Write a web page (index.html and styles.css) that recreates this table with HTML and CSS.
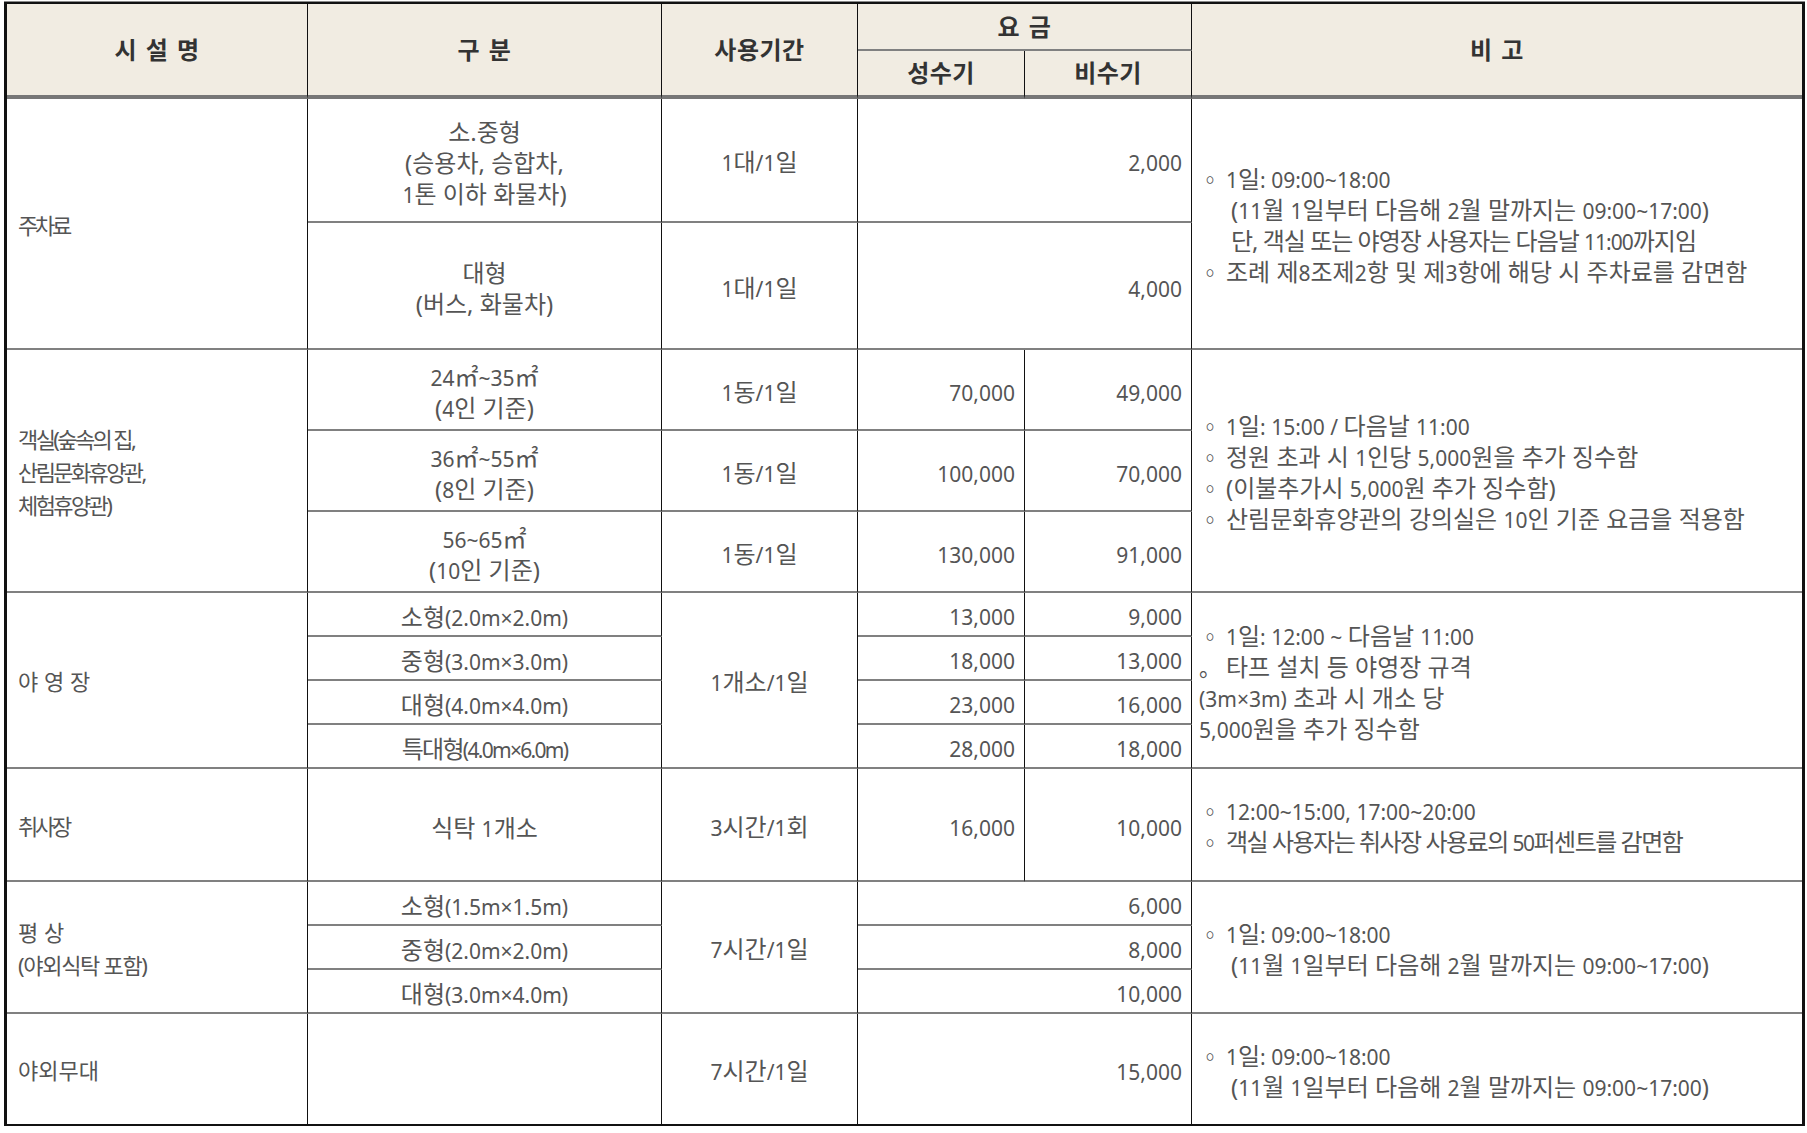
FILE: index.html
```html
<!DOCTYPE html>
<html lang="ko">
<head>
<meta charset="utf-8">
<title>시설 사용료</title>
<link rel="stylesheet" href="styles.css">
</head>
<body>
<table class="fee-table">
  <colgroup>
    <col class="c-name">
    <col class="c-kind">
    <col class="c-period">
    <col class="c-peak">
    <col class="c-off">
    <col class="c-note">
  </colgroup>
  <thead>
    <tr class="hr1">
      <th rowspan="2">시 설 명</th>
      <th rowspan="2">구 분</th>
      <th rowspan="2">사용기간</th>
      <th colspan="2" class="fee">요 금</th>
      <th rowspan="2" class="last">비 고</th>
    </tr>
    <tr class="hr2">
      <th>성수기</th>
      <th>비수기</th>
    </tr>
  </thead>
  <tbody>
    <tr class="h124">
      <td rowspan="2" class="name tight">주차료</td>
      <td class="kind">소.중형<br>(승용차, 승합차,<br><span class="en">1</span>톤 이하 화물차)</td>
      <td class="period"><span class="en">1</span>대<span class="en">/1</span>일</td>
      <td colspan="2" class="num">2,000</td>
      <td rowspan="2" class="note last">
        <div class="ln"><span class="b">◦</span><span class="en">1</span>일<span class="en">: 09:00~18:00</span></div>
        <div class="ln cont">(<span class="en">11</span>월 <span class="en">1</span>일부터 다음해 <span class="en">2</span>월 말까지는 <span class="en">09:00~17:00</span>)</div>
        <div class="ln cont narrow">단, 객실 또는 야영장 사용자는 다음날 <span class="en">11:00</span>까지임</div>
        <div class="ln"><span class="b">◦</span>조례 제<span class="en">8</span>조제<span class="en">2</span>항 및 제<span class="en">3</span>항에 해당 시 주차료를 감면함</div>
      </td>
    </tr>
    <tr class="h127">
      <td class="kind">대형<br>(버스, 화물차)</td>
      <td class="period"><span class="en">1</span>대<span class="en">/1</span>일</td>
      <td colspan="2" class="num">4,000</td>
    </tr>

    <tr class="h81">
      <td rowspan="3" class="name tight-b">객실(숲속의 집,<br>산림문화휴양관,<br>체험휴양관)</td>
      <td class="kind"><span class="en">24</span>㎡<span class="en">~35</span>㎡<br>(<span class="en">4</span>인 기준)</td>
      <td class="period"><span class="en">1</span>동<span class="en">/1</span>일</td>
      <td class="num">70,000</td>
      <td class="num">49,000</td>
      <td rowspan="3" class="note last">
        <div class="ln"><span class="b">◦</span><span class="en">1</span>일<span class="en">: 15:00 / </span>다음날 <span class="en">11:00</span></div>
        <div class="ln"><span class="b">◦</span>정원 초과 시 <span class="en">1</span>인당 <span class="en">5,000</span>원을 추가 징수함</div>
        <div class="ln"><span class="b">◦</span>(이불추가시 <span class="en">5,000</span>원 추가 징수함)</div>
        <div class="ln"><span class="b">◦</span>산림문화휴양관의 강의실은 <span class="en">10</span>인 기준 요금을 적용함</div>
      </td>
    </tr>
    <tr class="h81">
      <td class="kind"><span class="en">36</span>㎡<span class="en">~55</span>㎡<br>(<span class="en">8</span>인 기준)</td>
      <td class="period"><span class="en">1</span>동<span class="en">/1</span>일</td>
      <td class="num">100,000</td>
      <td class="num">70,000</td>
    </tr>
    <tr class="h81">
      <td class="kind"><span class="en">56~65</span>㎡<br>(<span class="en">10</span>인 기준)</td>
      <td class="period"><span class="en">1</span>동<span class="en">/1</span>일</td>
      <td class="num">130,000</td>
      <td class="num">91,000</td>
    </tr>

    <tr class="h44">
      <td rowspan="4" class="name">야 영 장</td>
      <td class="kind">소형<span class="en">(2.0m×2.0m)</span></td>
      <td rowspan="4" class="period"><span class="en">1</span>개소<span class="en">/1</span>일</td>
      <td class="num">13,000</td>
      <td class="num">9,000</td>
      <td rowspan="4" class="note last">
        <div class="ln"><span class="b">◦</span><span class="en">1</span>일<span class="en">: 12:00 ~ </span>다음날 <span class="en">11:00</span></div>
        <div class="ln"><span class="b">。</span>타프 설치 등 야영장 규격</div>
        <div class="ln"><span class="en">(3m×3m)</span> 초과 시 개소 당</div>
        <div class="ln"><span class="en">5,000</span>원을 추가 징수함</div>
      </td>
    </tr>
    <tr class="h44">
      <td class="kind">중형<span class="en">(3.0m×3.0m)</span></td>
      <td class="num">18,000</td>
      <td class="num">13,000</td>
    </tr>
    <tr class="h44">
      <td class="kind">대형<span class="en">(4.0m×4.0m)</span></td>
      <td class="num">23,000</td>
      <td class="num">16,000</td>
    </tr>
    <tr class="h44">
      <td class="kind squeeze">특대형<span class="en">(4.0m×6.0m)</span></td>
      <td class="num">28,000</td>
      <td class="num">18,000</td>
    </tr>

    <tr class="h113">
      <td class="name tight">취사장</td>
      <td class="kind">식탁 <span class="en">1</span>개소</td>
      <td class="period"><span class="en">3</span>시간<span class="en">/1</span>회</td>
      <td class="num">16,000</td>
      <td class="num">10,000</td>
      <td class="note last">
        <div class="ln"><span class="b">◦</span><span class="en">12:00~15:00, 17:00~20:00</span></div>
        <div class="ln narrow2"><span class="b">◦</span>객실 사용자는 취사장 사용료의 <span class="en">50</span>퍼센트를 감면함</div>
      </td>
    </tr>

    <tr class="h44">
      <td rowspan="3" class="name">평 상<br><span class="tight2">(야외식탁 포함)</span></td>
      <td class="kind">소형<span class="en">(1.5m×1.5m)</span></td>
      <td rowspan="3" class="period"><span class="en">7</span>시간<span class="en">/1</span>일</td>
      <td colspan="2" class="num">6,000</td>
      <td rowspan="3" class="note last">
        <div class="ln"><span class="b">◦</span><span class="en">1</span>일<span class="en">: 09:00~18:00</span></div>
        <div class="ln cont">(<span class="en">11</span>월 <span class="en">1</span>일부터 다음해 <span class="en">2</span>월 말까지는 <span class="en">09:00~17:00</span>)</div>
      </td>
    </tr>
    <tr class="h44">
      <td class="kind">중형<span class="en">(2.0m×2.0m)</span></td>
      <td colspan="2" class="num">8,000</td>
    </tr>
    <tr class="h44">
      <td class="kind">대형<span class="en">(3.0m×4.0m)</span></td>
      <td colspan="2" class="num">10,000</td>
    </tr>

    <tr class="h110">
      <td class="name">야외무대</td>
      <td class="kind"></td>
      <td class="period"><span class="en">7</span>시간<span class="en">/1</span>일</td>
      <td colspan="2" class="num">15,000</td>
      <td class="note last">
        <div class="ln"><span class="b">◦</span><span class="en">1</span>일<span class="en">: 09:00~18:00</span></div>
        <div class="ln cont">(<span class="en">11</span>월 <span class="en">1</span>일부터 다음해 <span class="en">2</span>월 말까지는 <span class="en">09:00~17:00</span>)</div>
      </td>
    </tr>
  </tbody>
</table>
</body>
</html>
```

FILE: styles.css
```css
html, body {
  margin: 0;
  padding: 0;
  background: #ffffff;
}

body {
  font-family: "Noto Sans", "Noto Sans CJK KR", sans-serif;
  font-size: 24px;
  color: #555555;
}

.fee-table {
  margin: 2px 0 0 4px;
  width: 1801px;
  table-layout: fixed;
  border-collapse: separate;
  border-spacing: 0;
  border-top: 2px solid #111111;
  border-bottom: 2px solid #111111;
  border-left: 3px solid #111111;
  border-right: 3px solid #111111;
  box-shadow: 0 -1px 0 #8a8a8a, 0 2px 0 #8a8a8a;
}

.c-name { width: 301px; }
.c-kind { width: 354px; }
.c-period { width: 196px; }
.c-peak { width: 167px; }
.c-off { width: 167px; }
.c-note { width: 610px; }

th, td {
  padding: 0;
  border-right: 1px solid #111111;
  border-bottom: 2px solid #808080;
  vertical-align: middle;
  font-weight: 400;
}

td {
  padding-top: 3px;
}

th.last, td.last {
  border-right: none;
}

thead th {
  background: #f1ece2;
  color: #333333;
  font-weight: 700;
  font-size: 24px;
  letter-spacing: 0.5px;
  word-spacing: 2px;
  text-align: center;
  border-bottom: 4px solid #777777;
  line-height: 30px;
}

thead th.fee {
  border-bottom: 2px solid #808080;
}

.hr1 { height: 47px; }
.hr2 { height: 48px; }

.h124 { height: 124px; }
.h127 { height: 127px; }
.h81 { height: 81px; }
.h44 { height: 44px; }
.h113 { height: 113px; }
.h110 { height: 110px; }

tbody tr:last-child td {
  border-bottom: none;
}

.en {
  font-size: 21px;
  line-height: 1;
}

.name {
  font-size: 22px;
  text-align: left;
  padding-left: 11px;
  line-height: 33px;
}

.tight { letter-spacing: -3.2px; }
.tight-b { letter-spacing: -2.6px; }
.tight2 { letter-spacing: -1.3px; }
.squeeze { letter-spacing: -1.7px; }
.narrow { letter-spacing: -1px; }
.narrow2 { letter-spacing: -1.5px; }

.kind {
  text-align: center;
  line-height: 31px;
  padding-top: 5px;
}

.period {
  text-align: center;
  line-height: 30px;
  padding-top: 4px;
}

.num {
  font-size: 21px;
  text-align: right;
  padding-right: 9px;
  padding-top: 6px;
  line-height: 30px;
}

.note {
  text-align: left;
  padding-left: 7px;
  line-height: 31px;
}

.ln {
  white-space: nowrap;
}

.ln .b {
  display: inline-block;
  width: 27px;
  font-size: 22px;
  line-height: 1;
  letter-spacing: 0;
}

.ln.cont {
  padding-left: 32px;
}
```
